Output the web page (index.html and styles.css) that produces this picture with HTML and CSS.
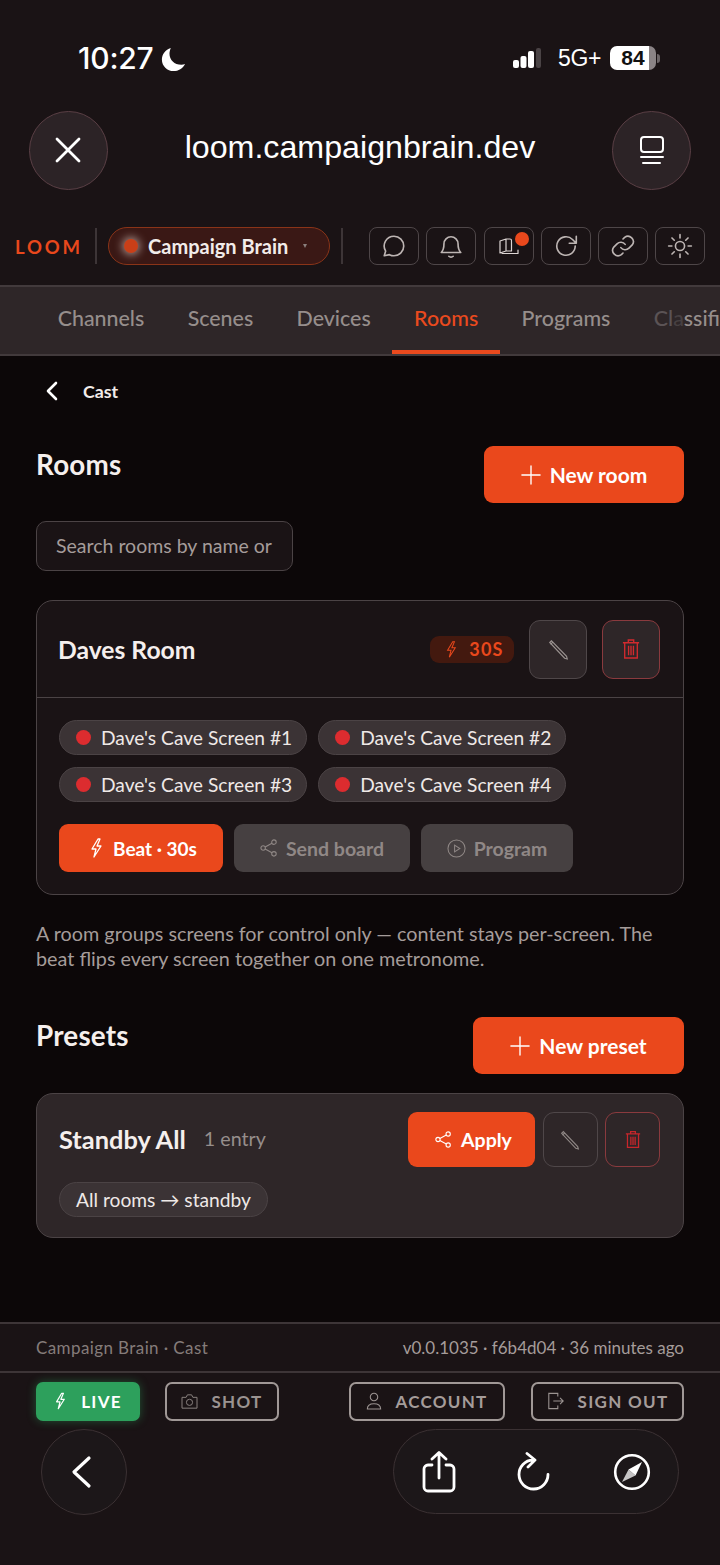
FILE: index.html
```html
<!DOCTYPE html>
<html lang="en">
<head>
    <meta charset="UTF-8">
    <meta name="viewport" content="width=device-width, initial-scale=1.0">
    <title>Rooms</title>
    <link rel="stylesheet" href="styles.css">
</head>
<body>
    <div class="status-bar">
        <div class="status-left">
            <span class="clock">10:27</span>
            <svg class="moon" viewBox="0 0 28 28"><path d="M11 1C5 3 1 8 1 14c0 7.500 6 13 13 13 5.500 0 10.500-3.200 13-8-1.200.5-2.800.8-4.200.8C15 19.800 9.500 14.500 9.500 7.500 9.500 5.500 10 3 11 1z" fill="#fff"/></svg>
        </div>
        <div class="status-right">
            <svg class="signal" viewBox="0 0 28 20"><rect x="0" y="12" width="6" height="8" rx="2" fill="#fff"/><rect x="7.500" y="8" width="6" height="12" rx="2" fill="#fff"/><rect x="15" y="3" width="6" height="17" rx="2" fill="#fff"/><rect x="23" y="0" width="5" height="20" rx="2" fill="#4a4345"/></svg>
            <span class="network">5G+</span>
            <div class="battery"><span class="battery-level">84</span><i class="battery-cap"></i></div>
        </div>
    </div>

    <div class="browser-head">
        <div class="round-btn">
            <svg class="close-icon" viewBox="0 0 32 32" width="32" height="32"><path d="M5 5l22 22M27 5L5 27" stroke="#fff" stroke-width="2.800" stroke-linecap="round"/></svg>
        </div>
        <div class="url">loom.campaignbrain.dev</div>
        <div class="round-btn">
            <svg viewBox="0 0 28 32" width="28" height="32" fill="none" stroke="#fff" stroke-width="2" stroke-linecap="round"><rect x="3" y="3" width="22" height="15" rx="3"/><path d="M3 23h22M5 29h17"/></svg>
        </div>
    </div>

    <div class="topbar">
        <span class="logo">LOOM</span>
        <i class="divider"></i>
        <div class="workspace">
            <i class="workspace-dot"></i>
            <span class="workspace-name">Campaign Brain</span>
            <i class="caret"></i>
        </div>
        <i class="divider"></i>
        <div class="tools">
            <div class="tool"><svg viewBox="0 0 24 24" width="26" height="26" class="tool-icon"><path d="M12 3a9 9 0 0 1 0 18c-1.500 0-3-.4-4.200-1L3 21l1.300-4.300A9 9 0 0 1 12 3z"/></svg></div>
            <div class="tool"><svg viewBox="0 0 24 24" width="26" height="26" class="tool-icon"><path d="M3 18c2-2 2.500-4 2.500-8a6.500 6.500 0 0 1 13 0c0 4 .5 6 2.500 8zM10 21.500c1 1 3 1 4 0"/></svg></div>
            <div class="tool">
                <svg viewBox="0 0 20 17" width="20" height="17" class="tool-icon book"><path d="M1 3l6-2v12l-6 2zM7 1h4c1 0 1.500 .6 1.500 1.500V13H7M3 15.500h16V12"/></svg>
                <i class="tool-badge"></i>
            </div>
            <div class="tool"><svg viewBox="0 0 24 24" width="26" height="26" class="tool-icon"><path d="M20.500 12A8.500 8.500 0 1 1 18 6l3 3M21.500 3v6.500H15"/></svg></div>
            <div class="tool"><svg viewBox="0 0 24 24" width="26" height="26" class="tool-icon"><path d="M10 13.500a5 5 0 0 0 7.500.5l3-3A5 5 0 0 0 13.500 4l-1.500 1.500M14 10.500a5 5 0 0 0-7.500-.5l-3 3A5 5 0 0 0 10.500 20l1.500-1.500"/></svg></div>
            <div class="tool"><svg viewBox="0 0 24 24" width="26" height="26" class="tool-icon"><circle cx="12" cy="12" r="4.200"/><path d="M12 1.500v3M12 19.500v3M1.500 12h3M19.500 12h3M4.600 4.600l2.100 2.100M17.300 17.300l2.100 2.100M4.600 19.400l2.100-2.100M17.300 6.700l2.100-2.100"/></svg></div>
        </div>
    </div>

    <nav class="tabs">
        <a class="tab">Channels</a>
        <a class="tab">Scenes</a>
        <a class="tab">Devices</a>
        <a class="tab active">Rooms</a>
        <a class="tab">Programs</a>
        <a class="tab last-tab"><span class="fade-1">Cl</span><span class="fade-2">a</span>ssifi</a>
    </nav>

    <main class="content">
        <div class="back-row">
            <svg viewBox="0 0 14 22" width="14" height="22" fill="none" stroke="#fff" stroke-width="2.600" stroke-linecap="round" stroke-linejoin="round"><path d="M11 3L3 11l8 8"/></svg>
            <span>Cast</span>
        </div>

        <div class="section-head">
            <h2>Rooms</h2>
            <button class="btn-add btn-room"><svg viewBox="0 0 22 22" width="20" height="20"><path d="M11 1v20M1 11h20" stroke="#fff" stroke-width="1.500" stroke-linecap="round"/></svg>New room</button>
        </div>

        <div class="search">Search rooms by name or</div>

        <section class="card room-card">
            <div class="room-head">
                <h3>Daves Room</h3>
                <div class="room-controls">
                    <span class="beat-tag"><svg viewBox="0 0 14 20" width="12" height="17" class="bolt"><path d="M9 1L3 11h4l-2 8 7-11H8l3-7z"/></svg>30S</span>
                    <div class="square-btn edit big">
                        <svg viewBox="0 0 24 24" width="21" height="21" fill="none" stroke="#9b9391" stroke-width="1.300"><path d="M4 2l-2 2 17 18 3 .8-.8-3zM2.800 6.200l2.800-2.600"/></svg>
                    </div>
                    <div class="square-btn trash big">
                        <svg viewBox="0 0 20 24" width="18" height="22" fill="none" stroke="#d12a2e" stroke-width="1.500"><path d="M1 5h18M7 5V2h6v3M3 5v17h14V5M7.300 8.500V19M10 8.500V19M12.700 8.500V19"/></svg>
                    </div>
                </div>
            </div>
            <div class="room-body">
                <div class="chips">
                    <span class="chip"><i class="chip-dot"></i>Dave's Cave Screen #1</span>
                    <span class="chip"><i class="chip-dot"></i>Dave's Cave Screen #2</span>
                    <span class="chip"><i class="chip-dot"></i>Dave's Cave Screen #3</span>
                    <span class="chip"><i class="chip-dot"></i>Dave's Cave Screen #4</span>
                </div>
                <div class="room-actions">
                    <button class="action primary beat"><svg viewBox="0 0 14 20" width="14" height="20" fill="none" stroke="#fff" stroke-width="1.300" stroke-linejoin="round"><path d="M9 1L3 11h4l-2 8 7-11H8l3-7z"/></svg>Beat · 30s</button>
                    <button class="action muted send"><svg viewBox="0 0 20 20" width="18" height="18" fill="none" stroke="#8f8785" stroke-width="1.200"><circle cx="15.500" cy="3.500" r="2.500"/><circle cx="3.500" cy="10" r="2.500"/><circle cx="15.500" cy="16.500" r="2.500"/><path d="M13.300 4.700L5.700 8.800M5.700 11.200l7.600 4.100"/></svg>Send board</button>
                    <button class="action muted program"><svg viewBox="0 0 20 20" width="19" height="19" fill="none" stroke="#8f8785" stroke-width="1.100"><circle cx="10" cy="10" r="9"/><path d="M8 6.500l5.500 3.500L8 13.500z"/></svg>Program</button>
                </div>
            </div>
        </section>

        <p class="note">A room groups screens for control only — content stays per-screen. The beat flips every screen together on one metronome.</p>

        <div class="section-head presets-head">
            <h2>Presets</h2>
            <button class="btn-add btn-preset"><svg viewBox="0 0 22 22" width="20" height="20"><path d="M11 1v20M1 11h20" stroke="#fff" stroke-width="1.500" stroke-linecap="round"/></svg>New preset</button>
        </div>

        <section class="card preset-card">
            <div class="preset-head">
                <div class="preset-title">
                    <h3>Standby All</h3>
                    <span class="entry-count">1 entry</span>
                </div>
                <div class="preset-controls">
                    <button class="action primary apply"><svg viewBox="0 0 20 20" width="17" height="17" fill="none" stroke="#fff" stroke-width="1.300"><circle cx="15.500" cy="3.500" r="2.500"/><circle cx="3.500" cy="10" r="2.500"/><circle cx="15.500" cy="16.500" r="2.500"/><path d="M13.300 4.700L5.700 8.800M5.700 11.200l7.600 4.100"/></svg>Apply</button>
                    <div class="square-btn edit small">
                        <svg viewBox="0 0 24 24" width="20" height="20" fill="none" stroke="#8f8785" stroke-width="1.400"><path d="M4 2l-2 2 17 18 3 .8-.8-3zM2.800 6.200l2.800-2.600"/></svg>
                    </div>
                    <div class="square-btn trash small">
                        <svg viewBox="0 0 20 24" width="16" height="19" fill="none" stroke="#c8262b" stroke-width="1.600"><path d="M1 5h18M7 5V2h6v3M3 5v17h14V5M7.300 8.500V19M10 8.500V19M12.700 8.500V19"/></svg>
                    </div>
                </div>
            </div>
            <span class="chip preset-chip">All rooms → standby</span>
        </section>
    </main>

    <footer class="footer">
        <div class="build-row">
            <span class="build-name">Campaign Brain · Cast</span>
            <span class="build-info">v0.0.1035 · f6b4d04 · 36 minutes ago</span>
        </div>
        <div class="footer-actions">
            <div class="footer-left">
                <button class="foot-btn live"><svg viewBox="0 0 14 20" width="12" height="18" fill="none" stroke="#fff" stroke-width="1.400" stroke-linejoin="round"><path d="M9 1L3 11h4l-2 8 7-11H8l3-7z"/></svg>LIVE</button>
                <button class="foot-btn shot"><svg viewBox="0 0 20 18" width="17" height="15" fill="none" stroke="#88807e" stroke-width="1.200"><path d="M1 4h5l1.500-3h5L14 4h5v13H1z"/><circle cx="10" cy="10" r="3.700"/></svg>SHOT</button>
            </div>
            <div class="footer-right">
                <button class="foot-btn account"><svg viewBox="0 0 18 20" width="16" height="18" fill="none" stroke="#9b9391" stroke-width="1.200"><circle cx="9" cy="5.500" r="4.200"/><path d="M1.500 19c0-4 3-6 7.500-6s7.500 2 7.500 6z"/></svg>ACCOUNT</button>
                <button class="foot-btn signout"><svg viewBox="0 0 20 20" width="18" height="18" fill="none" stroke="#9b9391" stroke-width="1.200"><path d="M12 5V1.500H2v17h10V15M7 10h11M14.500 6.500L18 10l-3.500 3.500"/></svg>SIGN OUT</button>
            </div>
        </div>
    </footer>

    <div class="browser-nav">
        <div class="nav-back">
            <svg viewBox="0 0 22 34" width="22" height="34" fill="none" stroke="#fff" stroke-width="3.200" stroke-linecap="round" stroke-linejoin="round"><path d="M19 3L4 17l15 14"/></svg>
        </div>
        <div class="nav-pill">
            <svg viewBox="0 0 34 42" width="34" height="42" fill="none" stroke="#fff" stroke-width="2.800" stroke-linecap="round" stroke-linejoin="round"><path d="M10 14H6a4 4 0 0 0-4 4v18a4 4 0 0 0 4 4h22a4 4 0 0 0 4-4V18a4 4 0 0 0-4-4h-4M17 27V2M10 8l7-6.500L24 8"/></svg>
            <svg class="reload" viewBox="0 0 34 40" width="34" height="40" fill="none" stroke="#fff" stroke-width="2.800" stroke-linecap="round" stroke-linejoin="round"><path d="M17 8a14.500 14.500 0 1 0 15 14.500M11 1.500L19 8l-7 7"/></svg>
            <svg viewBox="0 0 38 38" width="38" height="38" fill="none"><circle cx="19" cy="19" r="16.800" stroke="#fff" stroke-width="2.600"/><path d="M29 9l-6.500 13.500-7-6z" fill="#fff"/><path d="M9 29l6.500-12.500 7 6z" fill="#fff" opacity=".75"/></svg>
        </div>
    </div>
</body>
</html>
```

FILE: styles.css
```css
* {
    box-sizing: border-box;
}
html, body {
    margin: 0;
    padding: 0;
}
body {
    width: 720px;
    height: 1565px;
    overflow: hidden;
    background-color: #1a1315;
    color: #f2ecea;
    font-family: Lato, "Noto Sans", sans-serif;
}
h2, h3, p {
    margin: 0;
}
button {
    font-family: inherit;
    border: none;
    cursor: pointer;
    display: flex;
    align-items: center;
    justify-content: center;
}

/* phone status bar */
.status-bar {
    height: 110px;
    padding: 40px 60px 0 78px;
    display: flex;
    justify-content: space-between;
    align-items: flex-start;
    color: #fff;
    font-family: Inter, "Liberation Sans", Arial, sans-serif;
}
.status-left, .status-right {
    display: flex;
    align-items: center;
    height: 36px;
}
.clock {
    font-size: 30px;
    font-weight: 500;
    letter-spacing: -.2px;
}
.moon {
    width: 25px;
    height: 25px;
    margin-left: 7px;
    margin-top: 3px;
}
.signal {
    width: 28px;
    height: 20px;
}
.network {
    font-family: "Liberation Sans", Arial, sans-serif;
    font-size: 23px;
    margin-left: 17px;
    letter-spacing: -.4px;
}
.battery {
    display: flex;
    align-items: center;
    margin-left: 9px;
}
.battery-level {
    width: 46px;
    height: 24px;
    border-radius: 7px;
    background: linear-gradient(90deg, #fff 84%, #8b8486 84%);
    color: #111;
    font-family: "Liberation Sans", Arial, sans-serif;
    font-size: 21px;
    font-weight: 700;
    line-height: 24px;
    text-align: center;
}
.battery-cap {
    width: 3px;
    height: 9px;
    margin-left: 1px;
    border-radius: 0 3px 3px 0;
    background-color: #6d6668;
}

/* browser title row */
.browser-head {
    height: 80px;
    padding: 0 29px;
    display: flex;
    justify-content: space-between;
    align-items: center;
}
.round-btn {
    width: 79px;
    height: 79px;
    border-radius: 50%;
    background-color: #2c2326;
    border: 1.500px solid #5a3f45;
    display: flex;
    align-items: center;
    justify-content: center;
}
.close-icon {
    margin-right: 2px;
}
.url {
    color: #fff;
    font-family: "Liberation Sans", Arial, sans-serif;
    font-size: 32.200px;
    margin-top: -6px;
}

/* app top bar */
.topbar {
    height: 95px;
    padding: 17px 0 0 15px;
    display: flex;
    align-items: center;
}
.logo {
    flex: none;
    color: #e9481c;
    font-size: 18.500px;
    font-weight: 700;
    letter-spacing: 2.800px;
    width: 66px;
    padding-top: 1px;
    white-space: nowrap;
}
.divider {
    flex: none;
    width: 2px;
    height: 36px;
    background-color: #3d3537;
    margin: 0 11px 0 14px;
}
.workspace {
    flex: none;
    width: 222px;
    height: 38px;
    border-radius: 19px;
    background-color: #3a1815;
    border: 1.500px solid #8a3418;
    display: flex;
    align-items: center;
    padding-left: 15px;
}
.workspace-dot {
    width: 14px;
    height: 14px;
    border-radius: 50%;
    background-color: #c93f18;
    box-shadow: 0 0 8px 2px rgba(255, 235, 225, .55);
}
.workspace-name {
    font-size: 20px;
    font-weight: 700;
    margin-left: 10px;
    white-space: nowrap;
}
.caret {
    margin-left: 15px;
    border-left: 2.500px solid transparent;
    border-right: 2.500px solid transparent;
    border-top: 4px solid #8a7f7d;
}
.workspace + .divider {
    margin: 0 26px 0 11px;
}
.tools {
    flex: none;
    display: flex;
    gap: 7.300px;
}
.tool {
    position: relative;
    width: 50px;
    height: 38px;
    border-radius: 8px;
    border: 1.500px solid #4e4648;
    display: flex;
    align-items: center;
    justify-content: center;
}
.tool-icon {
    fill: none;
    stroke: #bdb5b3;
    stroke-width: 1.500;
    stroke-linecap: round;
    stroke-linejoin: round;
}
.tool-icon.book {
    stroke: #ddd6d4;
    stroke-width: 1.200;
}
.tool-badge {
    position: absolute;
    top: 3.500px;
    right: 3.500px;
    width: 14px;
    height: 14px;
    border-radius: 50%;
    background-color: #e9481c;
    box-shadow: 0 0 0 3px #1a1315;
}

/* tabs */
.tabs {
    height: 71px;
    padding-left: 36px;
    display: flex;
    overflow: hidden;
    background-color: #2e2628;
    border-top: 2px solid #423a3c;
    border-bottom: 2px solid #423a3c;
}
.tab {
    flex: none;
    padding: 0 21.700px;
    height: 67px;
    line-height: 63px;
    color: #968e8c;
    font-size: 21.400px;
    font-weight: 500;
}
.tab.active {
    color: #ea4a1e;
    border-bottom: 4px solid #ea4a1e;
}
.last-tab {
    padding-right: 0;
}
.fade-1 {
    color: #5b5355;
}
.fade-2 {
    color: #474042;
}

/* page */
.content {
    height: 966px;
    padding: 0 36px;
    background-color: #0c0708;
}
.back-row {
    height: 70px;
    padding-left: 9px;
    display: flex;
    align-items: center;
    gap: 24px;
    font-size: 17.800px;
    font-weight: 700;
    padding-bottom: 1px;
}
.section-head {
    display: flex;
    justify-content: space-between;
    align-items: flex-start;
    margin-top: 20px;
}
.section-head h2 {
    font-size: 27.800px;
    font-weight: 700;
    line-height: 38px;
    letter-spacing: .2px;
    color: #f5efed;
}
.btn-add {
    height: 57px;
    gap: 9px;
    border-radius: 9px;
    background-color: #ea481c;
    color: #fff;
    font-size: 21px;
    font-weight: 700;
}
.btn-room {
    width: 200px;
}
.btn-preset {
    width: 211px;
}
.search {
    width: 257px;
    height: 50px;
    margin-top: 18px;
    padding-left: 19px;
    border: 1.500px solid #4b4345;
    border-radius: 10px;
    background-color: #1a1315;
    color: #a59c9a;
    font-size: 19.500px;
    line-height: 47px;
    white-space: nowrap;
}
.card {
    border: 1.500px solid #4b4345;
    border-radius: 17px;
}
.room-card {
    margin-top: 29px;
    height: 295px;
    background-color: #1a1315;
}
.room-head {
    height: 97px;
    padding: 0 23px 0 21px;
    display: flex;
    justify-content: space-between;
    align-items: center;
    border-bottom: 1.500px solid #4b4345;
}
h3 {
    font-size: 24.700px;
    font-weight: 700;
    color: #f5efed;
    white-space: nowrap;
}
.room-controls {
    display: flex;
    align-items: center;
}
.beat-tag {
    width: 84px;
    height: 27px;
    margin-right: 15px;
    padding-left: 5px;
    border-radius: 9px;
    background-color: #43190f;
    color: #ea481c;
    font-size: 18px;
    font-weight: 700;
    letter-spacing: 1.200px;
    display: flex;
    align-items: center;
    justify-content: center;
    gap: 12px;
}
.bolt {
    fill: none;
    stroke: #ea481c;
    stroke-width: 1.200;
}
.square-btn {
    display: flex;
    align-items: center;
    justify-content: center;
    border-radius: 11px;
}
.square-btn.big {
    width: 58px;
    height: 59px;
    background-color: #2e2628;
}
.square-btn.big.trash {
    margin-left: 15px;
}
.square-btn.edit {
    border: 1.500px solid #4f4749;
}
.square-btn.trash {
    border: 1.500px solid #8a3a3e;
}
.square-btn.small {
    width: 55px;
    height: 55px;
}
.room-body {
    padding: 22px 0 0 22px;
}
.chips {
    display: flex;
    flex-wrap: wrap;
    gap: 12px 11px;
    width: 530px;
}
.chip {
    height: 35px;
    padding: 0 14px 0 16px;
    border-radius: 18px;
    background-color: #3b3335;
    border: 1.500px solid #4b4345;
    color: #efe9e7;
    font-size: 19.200px;
    display: inline-flex;
    align-items: center;
    white-space: nowrap;
}
.chip-dot {
    width: 15px;
    height: 15px;
    margin-right: 10px;
    border-radius: 50%;
    background-color: #dc2c2f;
}
.room-actions {
    display: flex;
    gap: 11px;
    margin-top: 22px;
}
.action {
    height: 48px;
    border-radius: 9px;
    gap: 8px;
    font-size: 19.500px;
    font-weight: 700;
}
.action.primary {
    background-color: #ea481c;
    color: #fff;
}
.action.muted {
    background-color: #464041;
    color: #908886;
}
.beat {
    width: 164px;
    gap: 10px;
    padding-left: 10px;
    font-size: 19px;
}
.send {
    width: 176px;
}
.program {
    width: 152px;
}
.note {
    margin-top: 26px;
    font-size: 19.800px;
    line-height: 25px;
    color: #a59c9a;
}
.presets-head {
    margin-top: 46px;
}
.preset-card {
    margin-top: 19px;
    height: 145px;
    padding: 18px 23px 0 22px;
    background-color: #2e2628;
}
.preset-head {
    display: flex;
    justify-content: space-between;
    align-items: center;
}
.preset-title {
    display: flex;
    align-items: center;
    gap: 18px;
}
.preset-title h3 {
    font-size: 25.400px;
    margin-top: -2px;
}
.entry-count {
    font-size: 19.700px;
    color: #968e8c;
    margin-top: -2px;
}
.preset-controls {
    display: flex;
    gap: 7.500px;
}
.apply {
    width: 127px;
    height: 55px;
    font-size: 19.500px;
    gap: 9px;
    padding-left: 10px;
}
.preset-chip {
    margin-top: 15px;
    padding: 0 16px;
    background-color: #3b3335;
    font-size: 19.200px;
}

/* footer */
.footer {
    height: 107px;
    border-top: 2px solid #3d3537;
}
.build-row {
    height: 49px;
    padding: 0 36px;
    border-bottom: 2px solid #3d3537;
    display: flex;
    justify-content: space-between;
    align-items: center;
    font-size: 17px;
    color: #857c7a;
}
.build-name {
    letter-spacing: .4px;
}
.build-info {
    color: #a59c9a;
}
.footer-actions {
    display: flex;
    justify-content: space-between;
    padding: 9px 36px 0 36px;
}
.footer-left, .footer-right {
    display: flex;
}
.foot-btn {
    height: 39px;
    border-radius: 7px;
    background: none;
    gap: 10px;
    font-size: 17px;
    font-weight: 700;
    letter-spacing: 1.300px;
    color: #a59c9a;
    border: 2.500px solid #a09896;
    padding-bottom: 2px;
}
.foot-btn.live {
    width: 104px;
    border: none;
    background-color: #2da05c;
    color: #fff;
    box-shadow: 0 0 10px rgba(45, 160, 92, .45);
    gap: 15px;
}
.foot-btn.shot {
    width: 114px;
    margin-left: 25px;
    color: #9b9391;
    gap: 13px;
}
.foot-btn.account {
    width: 156px;
    gap: 13px;
}
.foot-btn.signout {
    width: 153px;
    margin-left: 26px;
    gap: 13px;
}

/* browser bottom controls */
.browser-nav {
    display: flex;
    justify-content: space-between;
    padding: 0 41px;
}
.nav-back {
    width: 86px;
    height: 86px;
    border-radius: 50%;
    background-color: #1c1719;
    border: 1.500px solid #3b3133;
    display: flex;
    align-items: center;
    justify-content: center;
    padding-right: 7px;
}
.nav-pill {
    width: 286px;
    height: 85px;
    border-radius: 43px;
    background-color: #1c1719;
    border: 1.500px solid #3b3133;
    display: flex;
    align-items: center;
    justify-content: space-between;
    padding: 0 27px 0 28px;
}
.reload {
    margin-right: 3px;
}
```
